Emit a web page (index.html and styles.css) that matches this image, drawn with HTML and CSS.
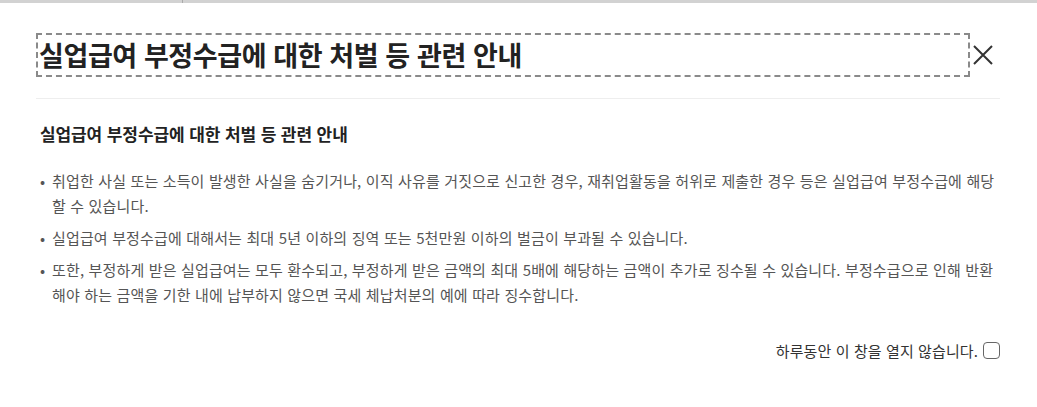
FILE: index.html
```html
<!DOCTYPE html>
<html lang="ko">
<head>
<meta charset="utf-8">
<title>실업급여 부정수급에 대한 처벌 등 관련 안내</title>
<link rel="stylesheet" href="styles.css">
</head>
<body>
<div class="backdrop-strip">
  <span class="strip-cell strip-left"></span>
  <span class="strip-cell strip-right"></span>
</div>
<div class="modal">
  <div class="modal-head">
    <h1 class="modal-title">실업급여 부정수급에 대한 처벌 등 관련 안내</h1>
    <button class="close-btn" aria-label="닫기">
      <svg width="20" height="20" viewBox="0 0 20 20"><path d="M1 1 L19 19 M19 1 L1 19" stroke="#333" stroke-width="2" fill="none"/></svg>
    </button>
  </div>
  <div class="modal-body">
    <h2 class="sub-title">실업급여 부정수급에 대한 처벌 등 관련 안내</h2>
    <ul class="notice-list">
      <li>취업한 사실 또는 소득이 발생한 사실을 숨기거나, 이직 사유를 거짓으로 신고한 경우, 재취업활동을 허위로 제출한 경우 등은 실업급여 부정수급에 해당할 수 있습니다.</li>
      <li>실업급여 부정수급에 대해서는 최대 5년 이하의 징역 또는 5천만원 이하의 벌금이 부과될 수 있습니다.</li>
      <li>또한, 부정하게 받은 실업급여는 모두 환수되고, 부정하게 받은 금액의 최대 5배에 해당하는 금액이 추가로 징수될 수 있습니다. 부정수급으로 인해 반환해야 하는 금액을 기한 내에 납부하지 않으면 국세 체납처분의 예에 따라 징수합니다.</li>
    </ul>
  </div>
  <div class="modal-foot">
    <label class="today-check">하루동안 이 창을 열지 않습니다. <input type="checkbox" class="chk"></label>
  </div>
</div>
</body>
</html>
```

FILE: styles.css
```css
* { box-sizing: border-box; }
html, body { margin: 0; padding: 0; background: #fff; }
body {
  font-family: "Noto Sans CJK KR", "Noto Sans", sans-serif;
  color: #222;
  width: 1037px;
  height: 407px;
  overflow: hidden;
}
.backdrop-strip {
  height: 3px;
  background: #d2d2d2;
  display: flex;
}
.strip-cell { height: 3px; }
.strip-left { width: 183px; border-right: 1px solid #aaa; }
.strip-right { flex: 1; }
.modal {
  padding: 30px 37px 0 36px;
}
.modal-head {
  display: flex;
  align-items: center;
  padding-bottom: 21px;
  border-bottom: 1px solid #eeeeee;
}
.modal-title {
  flex: 1;
  margin: 0;
  font-size: 27px;
  font-weight: 700;
  line-height: 40px;
  color: #222;
  border: 2px dashed #8a8a8a;
  padding: 0 0 0 1px;
  letter-spacing: -0.4px;
}
.close-btn {
  width: 30px;
  height: 30px;
  padding: 0 0 0 3px;
  border: 0;
  background: none;
  display: flex;
  align-items: center;
  justify-content: flex-start;
}
.modal-body { padding: 23px 0 0 4px; }
.sub-title {
  margin: 0;
  font-size: 17px;
  font-weight: 700;
  line-height: 24px;
  color: #222;
  letter-spacing: -0.1px;
}
.notice-list {
  list-style: none;
  margin: 22px 0 0;
  padding: 0;
}
.notice-list li {
  position: relative;
  padding-left: 12px;
  font-size: 15px;
  line-height: 25px;
  color: #555;
  margin-bottom: 7px;
  letter-spacing: 0.15px;
  word-break: break-all;
}
.notice-list li::before {
  content: "•";
  position: absolute;
  left: 0;
  top: 0;
  color: #555;
}
.modal-foot {
  display: flex;
  justify-content: flex-end;
  padding-top: 26px;
}
.today-check {
  display: flex;
  align-items: center;
  gap: 5px;
  font-size: 15px;
  color: #333;
  letter-spacing: 0.1px;
}
.chk {
  appearance: none;
  width: 17px;
  height: 17px;
  margin: 0;
  border: 1px solid #666;
  border-radius: 4px;
  background: #fff;
}
```
